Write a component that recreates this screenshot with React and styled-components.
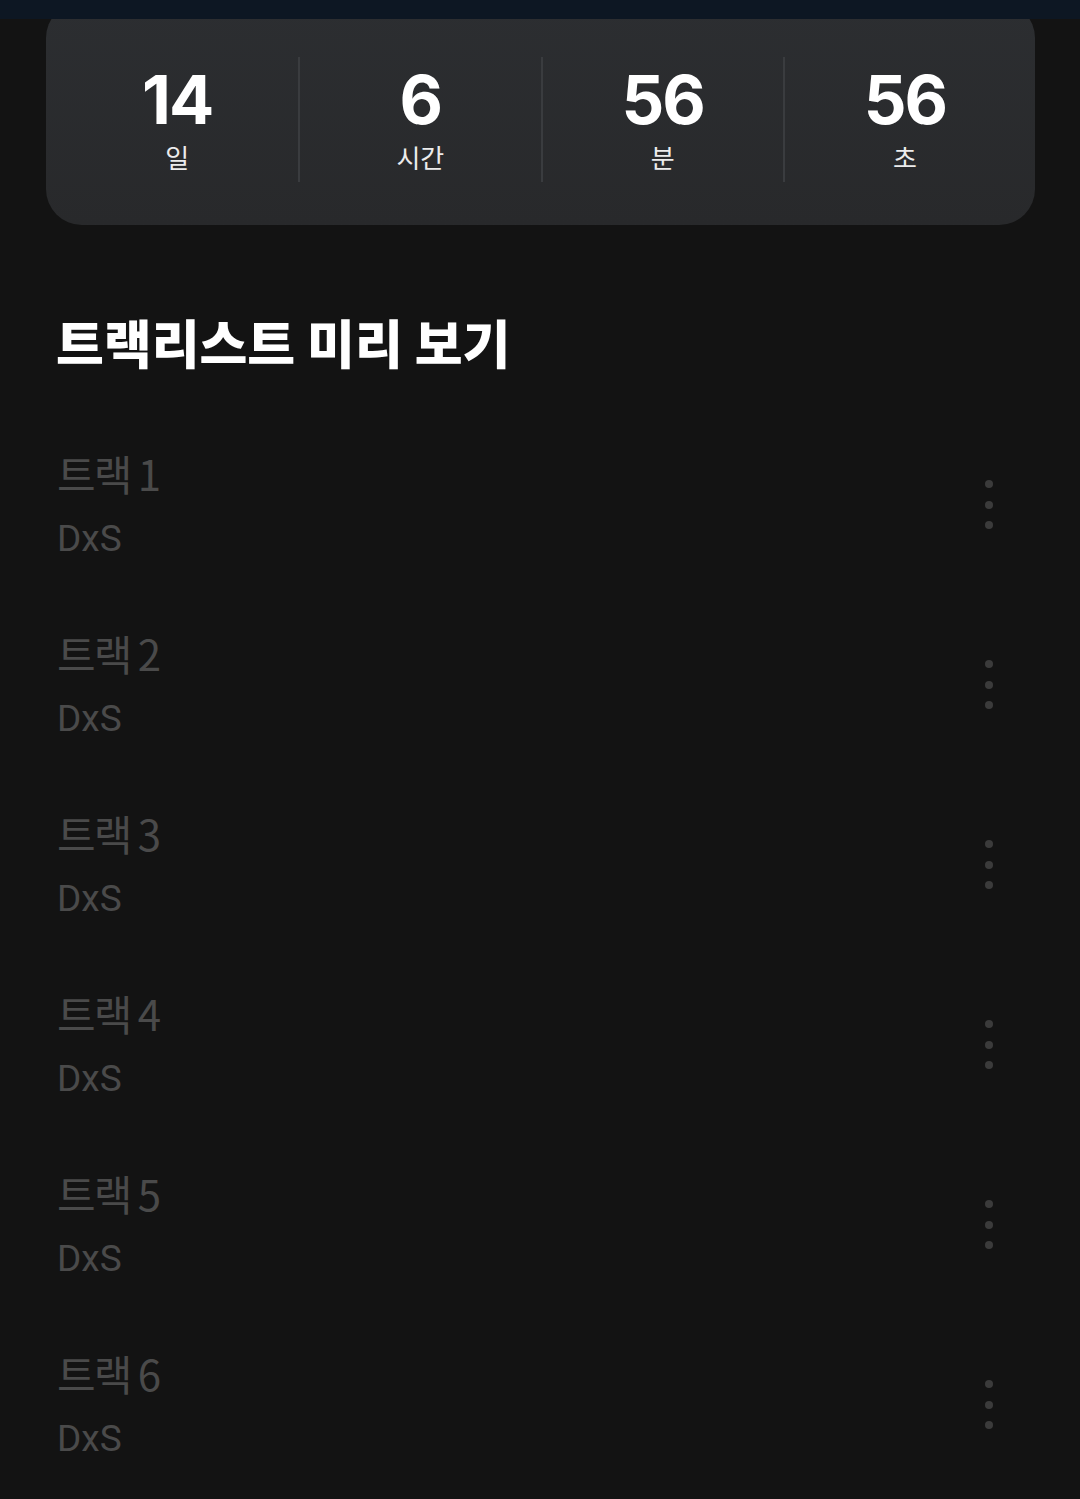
import React from "react";
import styled, { createGlobalStyle } from "styled-components";

const Global = createGlobalStyle`
  html, body { margin: 0; padding: 0; background: #131313; }
  body { font-family: "Noto Sans CJK KR", "Noto Sans", sans-serif; }
  * { box-sizing: border-box; }
`;

const Page = styled.div`
  width: 1080px;
  min-height: 1499px;
  background: #131313;
  overflow: hidden;
`;

const TopBar = styled.div`
  position: sticky;
  top: 0;
  z-index: 2;
  height: 19px;
  background: #0d1723;
`;

const Card = styled.section`
  margin: -17px 45px 0 46px;
  height: 223px;
  border-radius: 36px;
  background: linear-gradient(180deg, #2c2e31 0%, #28292b 100%);
  display: grid;
  grid-template-columns: repeat(4, 1fr);
  padding: 55px 10px 0;
`;

const Unit = styled.div`
  height: 125px;
  display: flex;
  flex-direction: column;
  align-items: center;
  border-left: ${(p) => (p.$first ? "none" : "2px solid #3a3c3f")};
`;

const Num = styled.div`
  font-family: Inter, "Liberation Sans", sans-serif;
  font-weight: 700;
  font-size: 67px;
  line-height: 1;
  color: #ffffff;
  letter-spacing: -2px;
  margin-top: 9px;
`;

const UnitLabel = styled.div`
  font-size: 26px;
  line-height: 1;
  color: #ececec;
  margin-top: 11px;
`;

const Heading = styled.h2`
  margin: 86px 0 0 56px;
  font-size: 52px;
  font-weight: 900;
  color: #ffffff;
  line-height: 1.2;
  letter-spacing: 0px;
`;

const List = styled.ul`
  list-style: none;
  margin: 75px 0 0;
  padding: 0;
`;

const Row = styled.li`
  height: 180px;
  display: flex;
  align-items: flex-start;
  justify-content: space-between;
  padding: 0 87px 0 57px;
`;

const Info = styled.div`
  display: flex;
  flex-direction: column;
`;

const Title = styled.div`
  font-family: "Noto Sans CJK KR", sans-serif;
  font-size: 42px;
  line-height: 1.2;
  color: #4a4a4a;
  letter-spacing: -2px;
`;

const Artist = styled.div`
  font-family: Roboto, "Noto Sans", sans-serif;
  font-size: 37px;
  line-height: 1.2;
  color: #4a4a4a;
  margin-top: 18px;
`;

const Menu = styled.div`
  display: flex;
  flex-direction: column;
  gap: 12.5px;
  margin-top: 32px;
`;

const Dot = styled.span`
  width: 8px;
  height: 8px;
  border-radius: 50%;
  background: #3b3b3b;
`;

const units = [
  { n: "14", l: "일" },
  { n: "6", l: "시간" },
  { n: "56", l: "분" },
  { n: "56", l: "초" },
];

export default function App() {
  return (
    <Page>
      <Global />
      <TopBar />
      <Card>
        {units.map((u, i) => (
          <Unit key={i} $first={i === 0}>
            <Num>{u.n}</Num>
            <UnitLabel>{u.l}</UnitLabel>
          </Unit>
        ))}
      </Card>
      <Heading>트랙리스트 미리 보기</Heading>
      <List>
        {[1, 2, 3, 4, 5, 6].map((n) => (
          <Row key={n}>
            <Info>
              <Title>트랙 {n}</Title>
              <Artist>DxS</Artist>
            </Info>
            <Menu>
              <Dot />
              <Dot />
              <Dot />
            </Menu>
          </Row>
        ))}
      </List>
    </Page>
  );
}
